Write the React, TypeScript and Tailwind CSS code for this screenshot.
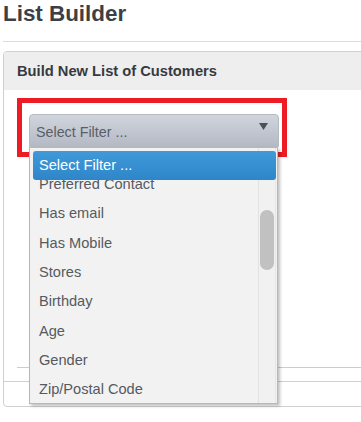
import React from "react";

const items = [
  "Preferred Contact",
  "Has email",
  "Has Mobile",
  "Stores",
  "Birthday",
  "Age",
  "Gender",
  "Zip/Postal Code",
];

export default function App() {
  return (
    <div
      className="relative w-[361px] h-[422px] overflow-hidden bg-white"
      style={{ fontFamily: '"Liberation Sans", Arial, Helvetica, sans-serif' }}
    >
      <div className="pl-[3px] pt-[1px]">
        <h1 className="text-[22.4px] font-bold text-[#3c4046] leading-[25px] m-0">List Builder</h1>
      </div>
      <div className="ml-[3px] mt-[15px] h-px bg-[#dddddd]" />
      <div className="ml-[3px] mt-[9px] w-[380px] border border-[#d0d0d0] rounded-[4px]">
        <div className="h-[38px] bg-[#eeeeee] rounded-t-[4px] flex items-center pl-[13px]">
          <span className="text-[14.7px] font-bold text-[#363a40]">Build New List of Customers</span>
        </div>
        <div className="h-[291px] flex flex-col">
          <div className="ml-[13px] mt-[8px] w-[270px] h-[59px] border-[5px] border-[#ed1c24] pl-[7px] pt-[11px]">
            <div className="relative w-[250px]">
              <div className="h-[33px] w-[250px] border border-[#b6bac3] rounded-t-[4px] bg-gradient-to-b from-[#d1d5dd] to-[#b4b9c4] flex justify-between pl-[6px] pr-[10px]">
                <span className="text-[14.3px] text-[#5a5e66] leading-[33px] pt-px">Select Filter ...</span>
                <svg width="9" height="7" viewBox="0 0 9 7" className="mt-[8px]">
                  <polygon points="0,0 9,0 4.5,7" fill="#4b4f57" />
                </svg>
              </div>
              <div className="absolute left-0 top-full w-[249px] h-[257px] border border-[#b8b8b8] bg-[#f2f2f2] shadow-[2px_2px_3px_rgba(0,0,0,0.25)] overflow-hidden z-10">
                <div className="absolute right-[1px] top-0 bottom-0 w-[18px] bg-[#f1f1f1] border-l border-[#e2e2e2] border-r border-r-[#e6e6e6]">
                  <div className="absolute left-[1px] right-[1px] top-[62px] h-[60px] rounded-full bg-[#c1c1c1]" />
                </div>
                <div className="pt-[22px] pl-[9px]">
                  {items.map((t) => (
                    <div key={t} className="h-[29.4px] flex items-center text-[14.6px] text-[#555a60]">
                      {t}
                    </div>
                  ))}
                </div>
                <div className="absolute left-[3px] top-[3px] w-[243px] h-[29px] rounded-[3px] bg-gradient-to-b from-[#3f9ad9] to-[#2e86c9] flex items-center pl-[6px]">
                  <span className="text-[14.6px] text-white">Select Filter ...</span>
                </div>
              </div>
            </div>
          </div>
          <div className="mt-auto ml-[13px] h-px bg-[#cccccc]" />
          <div className="h-[13px]" />
        </div>
        <div className="h-[25px] border-t border-[#d0d0d0]" />
      </div>
    </div>
  );
}
